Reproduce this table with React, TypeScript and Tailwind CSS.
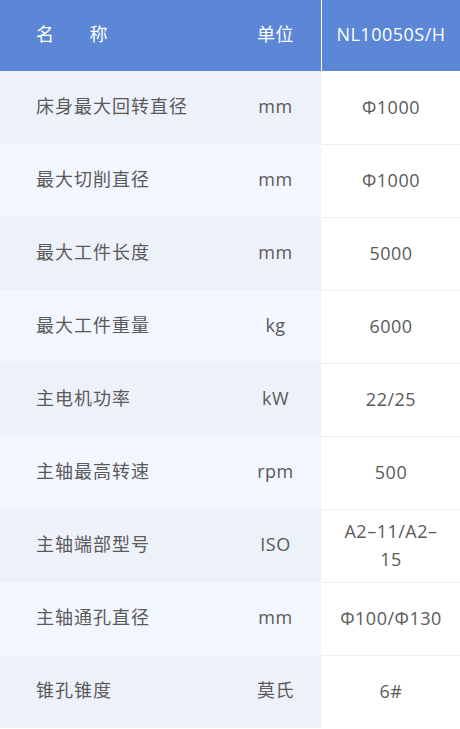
import React from "react";

const rows: [string, string, string][] = [
  ["床身最大回转直径", "mm", "Φ1000"],
  ["最大切削直径", "mm", "Φ1000"],
  ["最大工件长度", "mm", "5000"],
  ["最大工件重量", "kg", "6000"],
  ["主电机功率", "kW", "22/25"],
  ["主轴最高转速", "rpm", "500"],
  ["主轴端部型号", "ISO", "A2–11/A2–15"],
  ["主轴通孔直径", "mm", "Φ100/Φ130"],
  ["锥孔锥度", "莫氏", "6#"],
];

export default function App() {
  return (
    <div
      className="w-[460px] h-[729px] bg-white overflow-hidden text-[18px] tracking-[0.5px]"
      style={{ fontFamily: '"Open Sans", "Noto Sans CJK SC", sans-serif' }}
    >
      <div className="flex h-[71px] bg-[#5b87d6] text-white items-center">
        <div className="w-[230px] pl-9 flex pb-[3px]">
          <span>名</span>
          <span className="ml-[35px]">称</span>
        </div>
        <div className="w-[91px] text-center pb-[3px]">单位</div>
        <div className="w-px h-full bg-white" />
        <div className="flex-1 text-center pb-[3px]">NL10050S/H</div>
      </div>
      {rows.map(([name, unit, val], i) => (
        <div key={i} className="flex h-[73px] text-[#5a5a5a]">
          <div
            className={`flex w-[321px] items-center pb-[2px] ${
              i % 2 === 0 ? "bg-[#edf1fa]" : "bg-[#f2f6fe]"
            }`}
          >
            <div className="w-[230px] pl-9 tracking-[1px]">{name}</div>
            <div className="w-[91px] text-center">{unit}</div>
          </div>
          <div className="w-px bg-white" />
          <div
            className={`flex-1 flex items-center justify-center text-center px-4 leading-7 pb-[2px] ${
              i === 0 ? "" : "border-t border-[#eeeeee]"
            }`}
          >
            {val}
          </div>
        </div>
      ))}
    </div>
  );
}
